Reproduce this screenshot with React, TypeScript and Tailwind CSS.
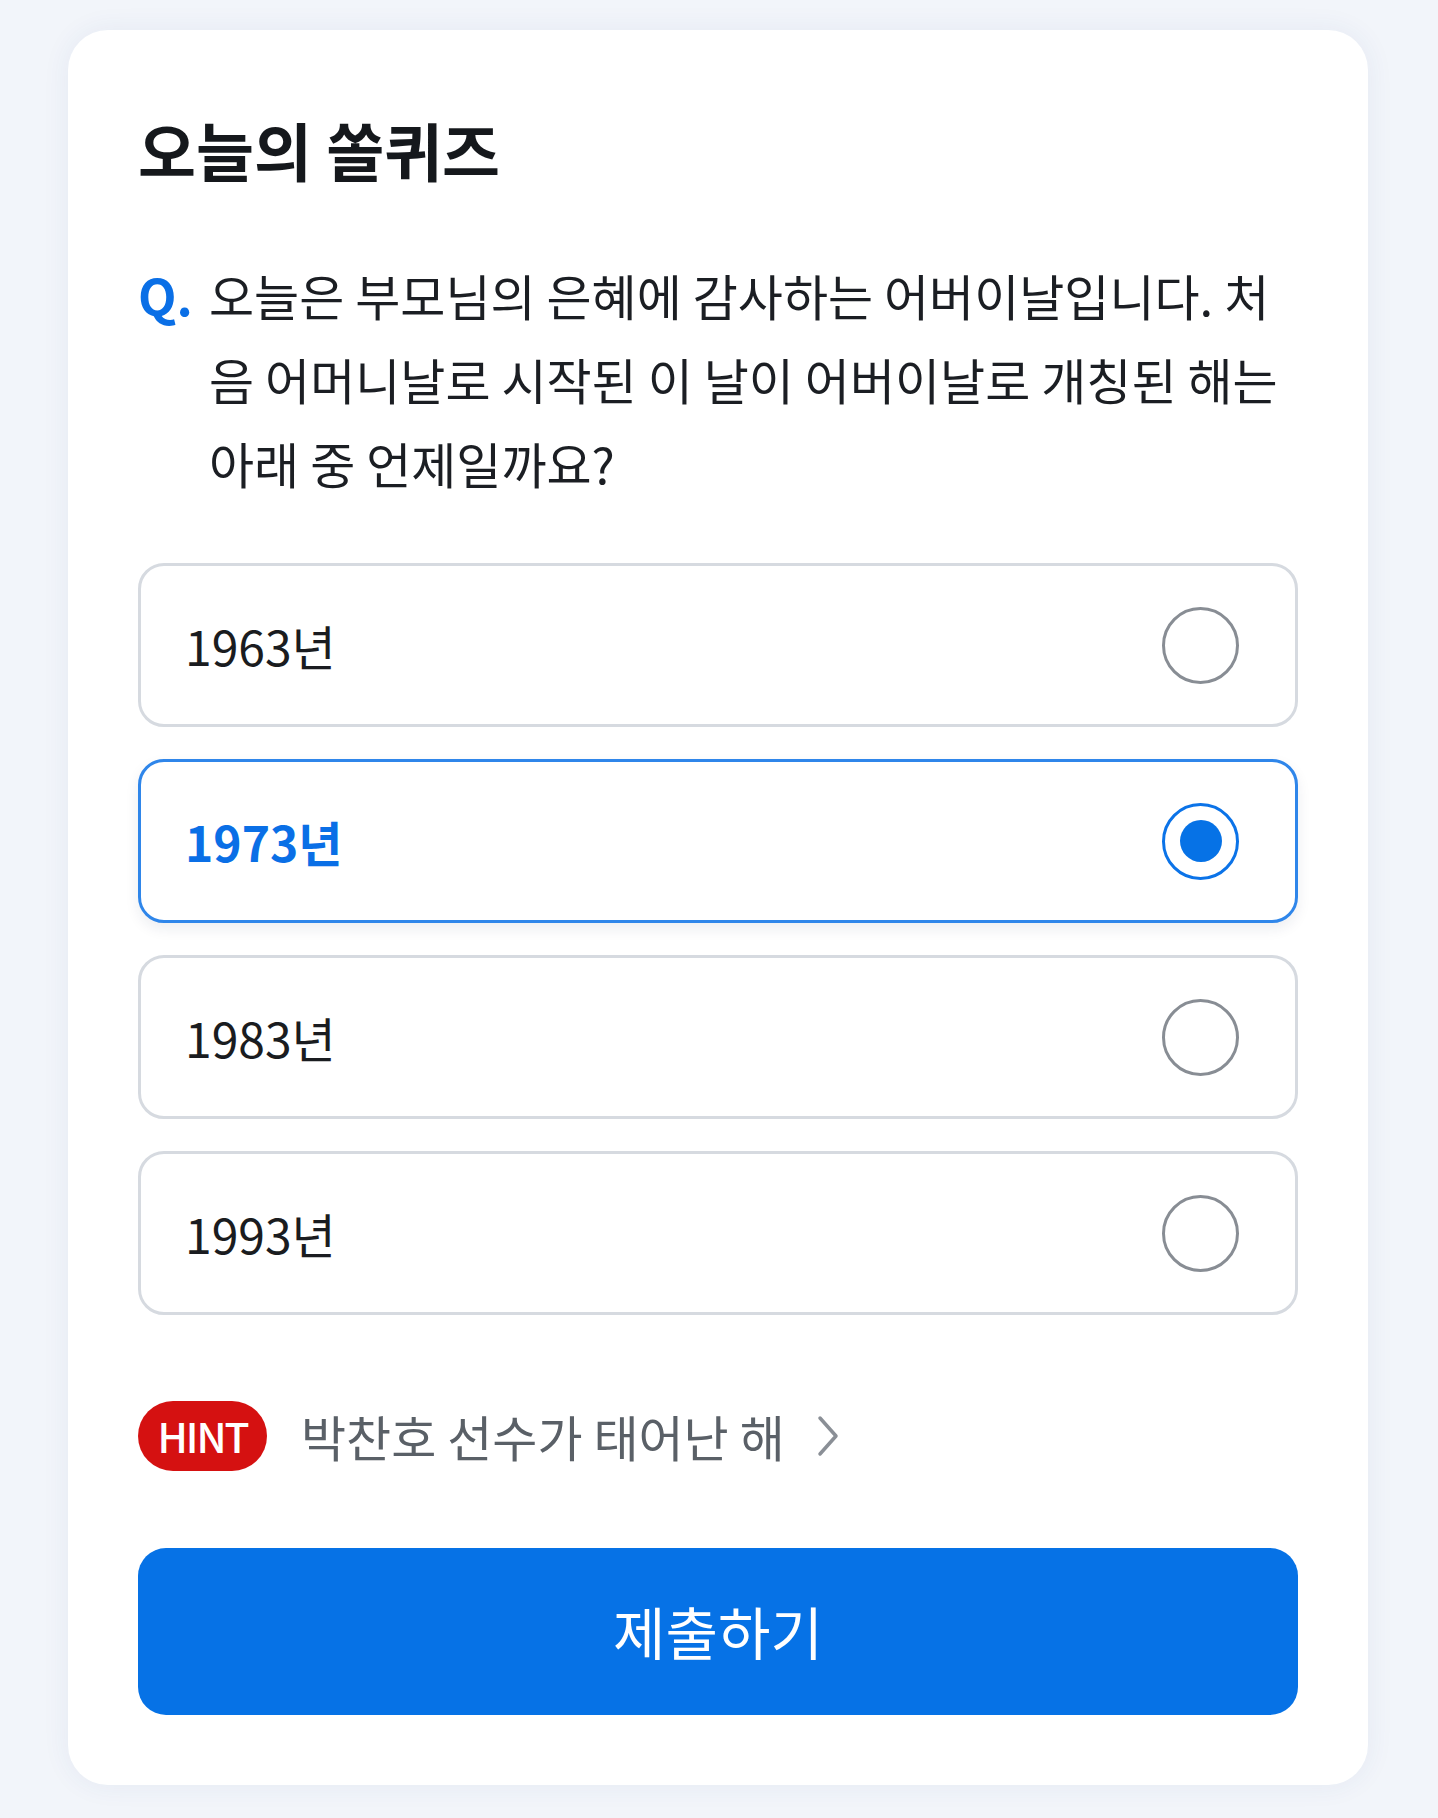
import { useState } from "react";

const options = ["1963년", "1973년", "1983년", "1993년"];

function Radio({ checked }: { checked: boolean }) {
  if (checked) {
    return (
      <span className="flex h-[77px] w-[77px] shrink-0 items-center justify-center rounded-full border-[3px] border-[#0b73e8]">
        <span className="h-[42px] w-[42px] rounded-full bg-[#0672e6]" />
      </span>
    );
  }
  return <span className="h-[77px] w-[77px] shrink-0 rounded-full border-[3px] border-[#888d94]" />;
}

export default function App() {
  const [selected, setSelected] = useState(1);

  return (
    <div
      className="min-h-screen bg-[#f2f5fa] pl-[68px] pr-[70px] pt-[30px] pb-[32px]"
      style={{ fontFamily: '"Noto Sans CJK KR", "Noto Sans", sans-serif' }}
    >
      <div className="rounded-[40px] bg-white px-[70px] pt-[85px] pb-[70px] shadow-[0_0_28px_rgba(40,70,140,0.07)]">
        <h1 className="text-[63px] font-bold leading-[68px] text-[#15181c]">오늘의 쏠퀴즈</h1>

        <div className="mt-[69px] flex items-baseline">
          <span className="w-[71px] shrink-0 text-[50px] font-bold leading-[84px] text-[#0a6fe6]">Q.</span>
          <p className="text-[49px] leading-[84px] text-[#1b1e23]">
            <span className="block whitespace-nowrap">오늘은 부모님의 은혜에 감사하는 어버이날입니다. 처</span>
            <span className="block whitespace-nowrap">음 어머니날로 시작된 이 날이 어버이날로 개칭된 해는</span>
            <span className="block whitespace-nowrap">아래 중 언제일까요?</span>
          </p>
        </div>

        <div className="mt-[58px] flex flex-col gap-[32px]">
          {options.map((opt, i) => {
            const checked = selected === i;
            return (
              <button
                key={opt}
                type="button"
                onClick={() => setSelected(i)}
                className={`flex h-[164px] items-center justify-between rounded-[26px] border-[3px] bg-white pl-[44px] pr-[56px] text-left ${
                  checked
                    ? "border-[#2f86ea] shadow-[0_6px_14px_rgba(20,40,80,0.08)]"
                    : "border-[#d6dae0]"
                }`}
              >
                <span
                  className={`text-[48px] ${checked ? "font-semibold text-[#0a6fe6]" : "text-[#1a1c20]"}`}
                >
                  {opt}
                </span>
                <Radio checked={checked} />
              </button>
            );
          })}
        </div>

        <div className="mt-[84px] flex items-center">
          <span className="flex h-[70px] w-[129px] items-center justify-center rounded-full bg-[#d51111] text-[41px] font-medium tracking-[-2px] text-white">
            HINT
          </span>
          <span className="ml-[34px] text-[49px] text-[#5a6067]">박찬호 선수가 태어난 해</span>
          <svg className="ml-[32px]" width="22" height="42" viewBox="0 0 22 42" fill="none">
            <path d="M3 3 L19 21 L3 39" stroke="#8a8f96" strokeWidth="3.5" strokeLinecap="round" strokeLinejoin="round" />
          </svg>
        </div>

        <button
          type="button"
          className="mt-[75px] flex h-[167px] w-full items-center justify-center rounded-[28px] bg-[#0672e6] text-[57px] text-white"
        >
          제출하기
        </button>
      </div>
    </div>
  );
}
